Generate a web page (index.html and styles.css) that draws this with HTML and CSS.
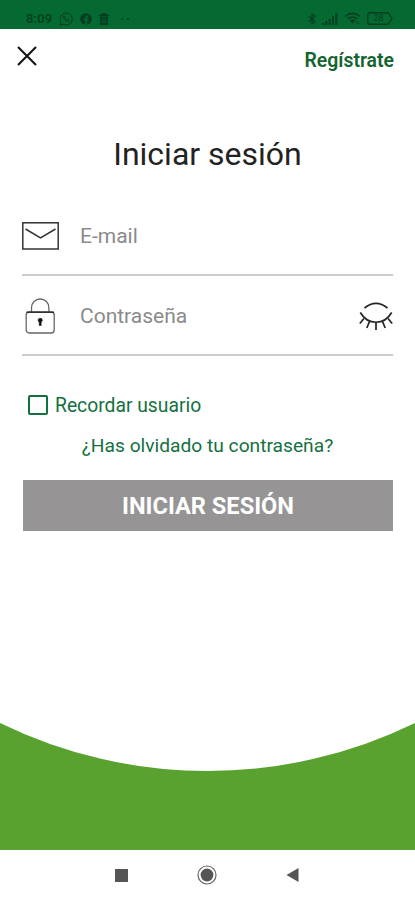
FILE: index.html
```html
<!DOCTYPE html>
<html lang="es">

<head>
    <meta charset="UTF-8">
    <meta name="viewport" content="width=device-width, initial-scale=1.0">
    <title>Iniciar sesión</title>
    <link rel="stylesheet" href="styles.css">
</head>

<body>
    <div class="status-bar">
        <div class="status-left">
            <span class="clock">8:09</span>
            <svg width="14" height="14" viewBox="0 0 14 14" fill="none" stroke="currentColor">
                <path d="M1 13l.9-3.2A6 6 0 1 1 4.2 12.200z" />
                <path d="M4.600 4.200c-.8 2 2.800 5.800 5 5l.3-1.200-1.500-.7-.8.6-1.700-1.700.6-.8-.7-1.400z" stroke-width=".8" />
            </svg>
            <svg width="12" height="12" viewBox="0 0 12 12">
                <circle cx="6" cy="6" r="5.800" fill="currentColor" />
                <path d="M5.300 12V7.500H3.900V5.800h1.400V4.600c0-1.500.8-2.200 2.100-2.200h1v1.500h-.7c-.6 0-.8.3-.8.8v1.100h1.500l-.3 1.700H6.900V12z" class="cutout" />
            </svg>
            <svg width="10" height="12" viewBox="0 0 10 12">
                <path d="M0 1.500h3V0h4v1.500h3V3H0zM1 3.500h8V12H1z" fill="currentColor" />
                <path d="M3.200 5v5.500M5 5v5.500M6.800 5v5.500" class="cutout-line" />
            </svg>
            <svg class="dots" width="10" height="4" viewBox="0 0 10 4" fill="currentColor">
                <circle cx="2" cy="2" r="1.100" />
                <circle cx="8" cy="2" r="1.100" />
            </svg>
        </div>
        <div class="status-right">
            <svg width="8" height="12" viewBox="0 0 8 12" fill="none" stroke="currentColor" stroke-width="1.200">
                <path d="M1 3.200l6 5.600L4 11.200V.8l3 2.400-6 5.600" />
            </svg>
            <svg width="16" height="12" viewBox="0 0 16 12" fill="currentColor">
                <path d="M0 10h2v2H0zM3.300 8h2v4h-2zM6.600 6h2v6h-2zM10 3h2v9h-2zM13.300 0h2v12h-2z" />
            </svg>
            <svg width="17" height="13" viewBox="0 0 17 13" fill="none" stroke="currentColor" stroke-width="1.600">
                <path d="M1 4.500Q8.500-1.700 16 4.500M3.600 7Q8.500 3 13.400 7" />
                <path d="M5.500 8.500Q8.500 6.200 11.500 8.500L8.500 11.500z" fill="currentColor" stroke="none" />
                <path d="M12 12l1.500-3 1.500 3" stroke-width=".8" />
            </svg>
            <span class="battery">
                <svg width="26" height="13" viewBox="0 0 26 13" fill="none" stroke="currentColor" stroke-width="1.400">
                    <path d="M3 .8h17.500q1 0 1.500 1l3 4.700-3 4.700q-.5 1-1.500 1H3Q.8 12.200.8 10V3Q.8.8 3 .8z" />
                </svg>
                <span class="battery-level">28</span>
            </span>
        </div>
    </div>

    <div class="top-bar">
        <button class="close-button" type="button" aria-label="Cerrar">
            <svg width="20" height="20" viewBox="0 0 20 20" fill="none" stroke="#111" stroke-width="2">
                <path d="M1 1l18 18M19 1L1 19" />
            </svg>
        </button>
        <a class="register" href="#">Regístrate</a>
    </div>

    <form class="login">
        <h1>Iniciar sesión</h1>

        <div class="field">
            <svg width="37" height="28" viewBox="0 0 37 28" fill="none" stroke="#333" stroke-width="1.500">
                <rect x=".8" y=".8" width="35.400" height="26.200" />
                <path d="M3.500 7l15 8.800 15-8.800" />
            </svg>
            <input type="email" placeholder="E-mail">
        </div>

        <div class="field">
            <svg width="37" height="36" viewBox="0 0 37 36" fill="none" stroke="#666" stroke-width="1.300">
                <path d="M9.500 14V9.700a8.700 8.700 0 0 1 17.400 0V14" />
                <rect x="4.200" y="14" width="28" height="21" rx="3" />
                <path d="M4.500 14.200h27.500" stroke="#222" />
                <path d="M18.200 20.300a2 2 0 0 1 1 3.800v3.400h-2v-3.400a2 2 0 0 1 1-3.800z" fill="#111" stroke="#111" stroke-width=".5" />
            </svg>
            <input type="password" placeholder="Contraseña">
            <svg width="34" height="28" viewBox="0 0 34 28" fill="none" stroke="#222" stroke-width="1.700">
                <path d="M5.500 6Q17-3.400 28.500 6" />
                <path d="M1.300 10.500C9 23.500 25 23.500 32.700 10.500" />
                <path d="M5 16.500L.8 21.500M10.500 19.500L7.800 26M17 20.500V28M23.500 19.500L26.200 26M29 16.500l4.200 5" />
            </svg>
        </div>

        <label class="remember">
            <input type="checkbox">
            Recordar usuario
        </label>
        <a class="forgot" href="#">¿Has olvidado tu contraseña?</a>
        <button class="submit" type="button">INICIAR SESIÓN</button>
    </form>

    <svg class="wave" viewBox="0 0 415 127">
        <path d="M0 0A472.500 472.500 0 0 0 415 0V127H0z" fill="#5aa22f" />
    </svg>

    <div class="nav-bar">
        <svg width="13" height="13" viewBox="0 0 13 13">
            <rect width="13" height="13" fill="#555" />
        </svg>
        <svg width="20" height="20" viewBox="0 0 20 20">
            <circle cx="10" cy="10" r="9" fill="none" stroke="#666" stroke-width="1.200" />
            <circle cx="10" cy="10" r="6.400" fill="#555" />
        </svg>
        <svg width="13" height="14" viewBox="0 0 13 14">
            <path d="M12.500 0v14L.5 7z" fill="#555" />
        </svg>
    </div>
</body>

</html>
```

FILE: styles.css
```css
* {
    box-sizing: border-box;
}

body {
    margin: 0;
    height: 900px;
    display: flex;
    flex-direction: column;
    overflow: hidden;
    font-family: Roboto, "Liberation Sans", sans-serif;
    background-color: #fff;
}

svg {
    display: block;
    flex: none;
}

/* status bar */
.status-bar {
    height: 29px;
    padding: 8px 22px 0 26px;
    display: flex;
    justify-content: space-between;
    background-color: #046a32;
    color: #073d20;
}

.status-left,
.status-right {
    height: 21px;
    display: flex;
    align-items: center;
}

.status-left {
    gap: 7px;
}

.status-right {
    gap: 6px;
}

.clock {
    font-size: 13px;
    font-weight: 500;
    letter-spacing: 0.2px;
}

.dots {
    margin-left: 4px;
}

.cutout {
    fill: #046a32;
}

.cutout-line {
    stroke: #046a32;
    stroke-width: 0.7;
}

.battery {
    display: grid;
    align-items: center;
}

.battery > * {
    grid-area: 1 / 1;
}

.battery-level {
    padding-right: 3px;
    text-align: center;
    font-size: 9px;
    line-height: 13px;
}

/* header */
.top-bar {
    height: 61px;
    padding: 0 21px 0 17px;
    display: flex;
    justify-content: space-between;
    align-items: center;
}

.close-button {
    padding: 0;
    margin-bottom: 7px;
    border: none;
    background: none;
}

.register {
    margin-top: 2px;
    color: #14642f;
    font-size: 19.4px;
    font-weight: 600;
    text-decoration: none;
}

/* form */
.login {
    padding: 0 22px;
    display: flex;
    flex-direction: column;
}

h1 {
    margin: 44px 0 21px;
    text-align: center;
    font-size: 32px;
    line-height: 40px;
    font-weight: 400;
    color: #222;
}

.field {
    height: 80px;
    padding-top: 2px;
    display: flex;
    align-items: center;
    border-bottom: 2px solid #ccc;
}

.field:first-of-type {
    height: 81px;
}

.field input {
    flex: 1;
    min-width: 0;
    margin-left: 21px;
    padding: 0;
    border: none;
    outline: none;
    font-family: inherit;
    font-size: 21px;
}

.field input::placeholder {
    color: #8a8a8a;
}

.remember {
    height: 24px;
    margin: 37px 0 0 6px;
    display: flex;
    align-items: center;
    gap: 7px;
    color: #14703f;
    font-size: 19.3px;
}

.remember input {
    appearance: none;
    width: 20px;
    height: 20px;
    margin: 0;
    border: 2px solid #14703f;
    border-radius: 2px;
}

.forgot {
    margin-top: 17px;
    line-height: 24px;
    text-align: center;
    color: #14703f;
    font-size: 19.2px;
    text-decoration: none;
}

.submit {
    height: 51px;
    margin: 22px 0 0 1px;
    border: none;
    background-color: #969494;
    color: #fff;
    font-family: inherit;
    font-size: 23.6px;
    font-weight: 700;
}

/* bottom */
.wave {
    width: 100%;
    height: 127px;
    margin-top: auto;
}

.nav-bar {
    height: 50px;
    padding-left: 115px;
    display: flex;
    align-items: center;
    gap: 69px;
}
```
